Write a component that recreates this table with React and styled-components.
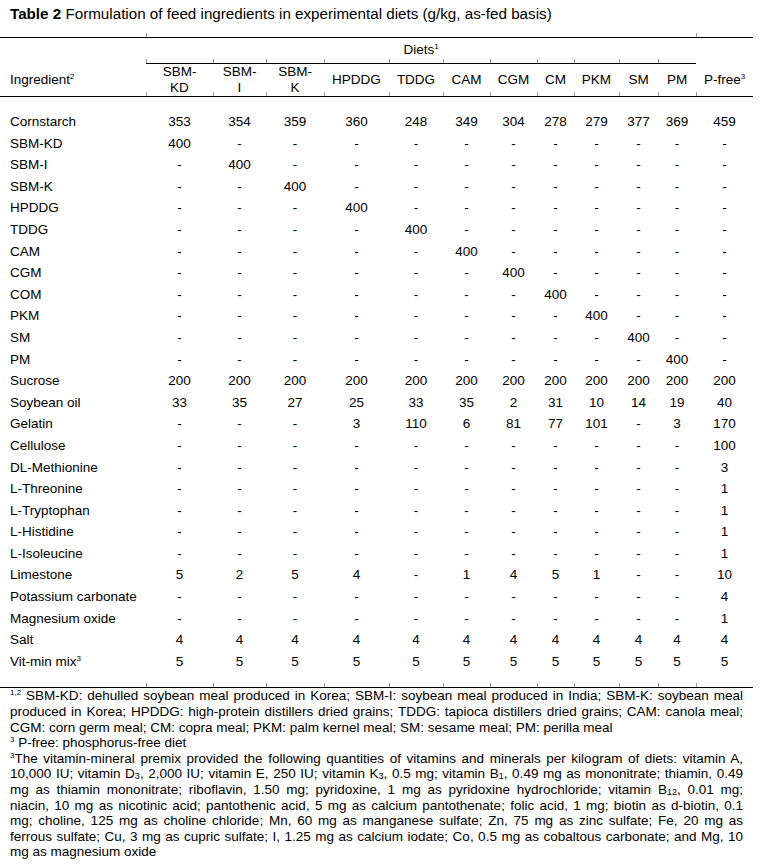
import React from 'react';
import styled, { createGlobalStyle, css } from 'styled-components';

const COLS = '146px 67px 53px 58px 65px 54px 47px 47px 37px 45px 39px 38px 57px';

const DIETS = [
  ['SBM-', 'KD'], ['SBM-', 'I'], ['SBM-', 'K'], ['HPDDG'], ['TDDG'], ['CAM'],
  ['CGM'], ['CM'], ['PKM'], ['SM'], ['PM'],
];

const d = (n, v) => Array.from({ length: 12 }, (_, i) => (i === n ? v : '-'));
const last = (v) => [...Array(11).fill('-'), v];

const ROWS = [
  ['Cornstarch', ['353', '354', '359', '360', '248', '349', '304', '278', '279', '377', '369', '459']],
  ['SBM-KD', d(0, '400')],
  ['SBM-I', d(1, '400')],
  ['SBM-K', d(2, '400')],
  ['HPDDG', d(3, '400')],
  ['TDDG', d(4, '400')],
  ['CAM', d(5, '400')],
  ['CGM', d(6, '400')],
  ['COM', d(7, '400')],
  ['PKM', d(8, '400')],
  ['SM', d(9, '400')],
  ['PM', d(10, '400')],
  ['Sucrose', Array(12).fill('200')],
  ['Soybean oil', ['33', '35', '27', '25', '33', '35', '2', '31', '10', '14', '19', '40']],
  ['Gelatin', ['-', '-', '-', '3', '110', '6', '81', '77', '101', '-', '3', '170']],
  ['Cellulose', last('100')],
  ['DL-Methionine', last('3')],
  ['L-Threonine', last('1')],
  ['L-Tryptophan', last('1')],
  ['L-Histidine', last('1')],
  ['L-Isoleucine', last('1')],
  ['Limestone', ['5', '2', '5', '4', '-', '1', '4', '5', '1', '-', '-', '10']],
  ['Potassium carbonate', last('4')],
  ['Magnesium oxide', last('1')],
  ['Salt', Array(12).fill('4')],
  ['Vit-min mix', Array(12).fill('5'), '3'],
];

const GlobalStyle = createGlobalStyle`
  body { margin: 0; background: #fff; }
`;

const Page = styled.div`
  width: 765px;
  font-family: "Liberation Sans", Arial, sans-serif;
  font-size: 13.5px;
  color: #000;
`;

const Title = styled.div`
  height: 37px;
  padding: 6px 10px 0;
  box-sizing: border-box;
  line-height: 16px;
  font-size: 15.2px;
`;

const Table = styled.div`
  width: 753px;
  border-top: 1px solid #000;
  border-bottom: 1px solid #000;
`;

const Grid = styled.div`
  display: grid;
  grid-template-columns: ${COLS};
`;

const Body = styled(Grid)`
  padding-top: 14px;
`;

const tickMark = css`
  &::before {
    content: '';
    position: absolute;
    left: 0;
    bottom: 0;
    width: 1px;
    height: 4px;
    background: #9a9a9a;
  }
`;

const topTickMark = css`
  &::after {
    content: '';
    position: absolute;
    left: 0;
    top: -5px;
    width: 1px;
    height: 4px;
    background: #9a9a9a;
  }
`;

const DietsLabel = styled.div`
  grid-column: 2 / 13;
  position: relative;
  height: 21px;
  box-sizing: border-box;
  padding-top: 4px;
  line-height: 16px;
  text-align: center;
  ${topTickMark}
`;

const Blank = styled.div`
  position: relative;
  ${(p) => p.$topTick && topTickMark}
`;

const TickCell = styled.div`
  position: relative;
  height: ${(p) => p.$h || 4}px;
  ${(p) => p.$line && 'border-bottom: 1px solid #000;'}
  ${(p) => p.$tick && tickMark}
`;

const HeadCell = styled.div`
  position: relative;
  height: 32px;
  display: flex;
  flex-direction: column;
  justify-content: center;
  align-items: ${(p) => (p.$first ? 'flex-start' : 'center')};
  padding-left: ${(p) => (p.$first ? '10px' : '0')};
  line-height: 16px;
  border-bottom: 1px solid #000;
  ${(p) => !p.$first && tickMark}
`;

const BodyCell = styled.div`
  line-height: 21.6px;
  height: 21.6px;
  white-space: nowrap;
  text-align: ${(p) => (p.$first ? 'left' : 'center')};
  padding-left: ${(p) => (p.$first ? '10px' : '0')};
`;

const Sup = styled.sup`
  font-size: 8px;
  line-height: 0;
  vertical-align: 5px;
`;

const Sub = styled.sub`
  font-size: 9px;
  line-height: 0;
  vertical-align: -1px;
`;

const Notes = styled.div`
  width: 733px;
  padding-left: 10px;
  line-height: 15.6px;
`;

const NoteLine = styled.div`
  text-align: justify;
  text-align-last: ${(p) => (p.$last ? 'left' : 'justify')};
`;

export default function App() {
  return (
    <Page>
      <GlobalStyle />
      <Title>
        <b>Table 2</b> Formulation of feed ingredients in experimental diets (g/kg, as-fed basis)
      </Title>
      <Table>
        <Grid>
          <Blank />
          <DietsLabel>
            Diets<Sup>1</Sup>
          </DietsLabel>
          <Blank $topTick />
          <TickCell />
          {DIETS.map((_, i) => (
            <TickCell key={i} $tick $line />
          ))}
          <TickCell />
        </Grid>
        <Grid>
          <HeadCell $first>
            <span>
              Ingredient<Sup>2</Sup>
            </span>
          </HeadCell>
          {DIETS.map((lines, i) => (
            <HeadCell key={i}>
              {lines.map((l) => (
                <span key={l}>{l}</span>
              ))}
            </HeadCell>
          ))}
          <HeadCell>
            <span>
              P-free<Sup>3</Sup>
            </span>
          </HeadCell>
        </Grid>
        <Body>
          {ROWS.map(([name, vals, sup]) => (
            <React.Fragment key={name}>
              <BodyCell $first>
                {name}
                {sup && <Sup>{sup}</Sup>}
              </BodyCell>
              {vals.map((v, i) => (
                <BodyCell key={i}>{v}</BodyCell>
              ))}
            </React.Fragment>
          ))}
          <TickCell $h={15} />
          {Array.from({ length: 12 }, (_, i) => (
            <TickCell key={i} $h={15} $tick />
          ))}
        </Body>
      </Table>
      <Notes>
        <NoteLine>
          <Sup>1,2</Sup> SBM-KD: dehulled soybean meal produced in Korea; SBM-I: soybean meal produced in India; SBM-K: soybean meal
        </NoteLine>
        <NoteLine>
          produced in Korea; HPDDG: high-protein distillers dried grains; TDDG: tapioca distillers dried grains; CAM: canola meal;
        </NoteLine>
        <NoteLine $last>
          CGM: corn germ meal; CM: copra meal; PKM: palm kernel meal; SM: sesame meal; PM: perilla meal
        </NoteLine>
        <NoteLine $last>
          <Sup>3</Sup> P-free: phosphorus-free diet
        </NoteLine>
        <NoteLine>
          <Sup>3</Sup>The vitamin-mineral premix provided the following quantities of vitamins and minerals per kilogram of diets: vitamin A,
        </NoteLine>
        <NoteLine>
          10,000 IU; vitamin D<Sub>3</Sub>, 2,000 IU; vitamin E, 250 IU; vitamin K<Sub>3</Sub>, 0.5 mg; vitamin B<Sub>1</Sub>, 0.49 mg as mononitrate; thiamin, 0.49
        </NoteLine>
        <NoteLine>
          mg as thiamin mononitrate; riboflavin, 1.50 mg; pyridoxine, 1 mg as pyridoxine hydrochloride; vitamin B<Sub>12</Sub>, 0.01 mg;
        </NoteLine>
        <NoteLine>
          niacin, 10 mg as nicotinic acid; pantothenic acid, 5 mg as calcium pantothenate; folic acid, 1 mg; biotin as d-biotin, 0.1
        </NoteLine>
        <NoteLine>
          mg; choline, 125 mg as choline chloride; Mn, 60 mg as manganese sulfate; Zn, 75 mg as zinc sulfate; Fe, 20 mg as
        </NoteLine>
        <NoteLine>
          ferrous sulfate; Cu, 3 mg as cupric sulfate; I, 1.25 mg as calcium iodate; Co, 0.5 mg as cobaltous carbonate; and Mg, 10
        </NoteLine>
        <NoteLine $last>mg as magnesium oxide</NoteLine>
      </Notes>
    </Page>
  );
}
